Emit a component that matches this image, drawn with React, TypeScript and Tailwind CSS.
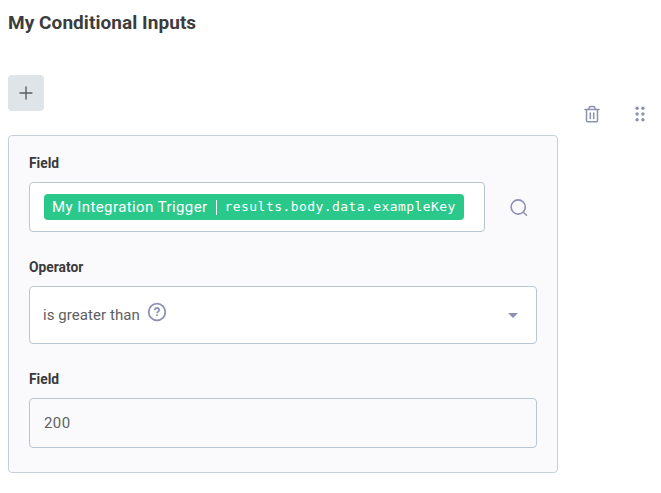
import React from "react";

function Label({ children }: { children: React.ReactNode }) {
  return <div className="h-4 text-[13.8px] font-bold leading-4 text-[#3a3a3a]">{children}</div>;
}

function TrashIcon() {
  return (
    <svg width="16" height="18" viewBox="0 0 16 18" fill="none" stroke="#8c91b2" strokeWidth="1.5" strokeLinecap="round" strokeLinejoin="round">
      <path d="M1 4.5h14M5 4.5V3.4a2 2 0 0 1 2-2h2a2 2 0 0 1 2 2v1.1M2.5 4.7v10.9a1.2 1.2 0 0 0 1.2 1.2h8.6a1.2 1.2 0 0 0 1.2-1.2V4.7M6.3 8v5.5M9.7 8v5.5" />
    </svg>
  );
}

function DragIcon() {
  return (
    <svg width="10" height="16" viewBox="0 0 10 16" fill="#8c91b2">
      {[2.2, 8, 13.8].map((y) => (
        <g key={y}>
          <circle cx="2.1" cy={y} r="1.7" />
          <circle cx="7.9" cy={y} r="1.7" />
        </g>
      ))}
    </svg>
  );
}

export default function App() {
  return (
    <div className="h-[493px] w-[661px] overflow-hidden bg-white pl-2 pt-[11px] font-['Roboto',sans-serif]">
      <h1 className="h-6 text-[19px] font-bold leading-6 tracking-[0.06px] text-[#3c3c3c]">My Conditional Inputs</h1>
      <div className="flex">
        <div className="w-[550px] pt-10">
          <button className="flex size-9 items-center justify-center rounded-[4px] bg-[#dfe4e8]">
            <svg width="14" height="14" viewBox="0 0 14 14" stroke="#5b5d5f" strokeWidth="1.4" strokeLinecap="round">
              <path d="M7 1v12M1 7h12" />
            </svg>
          </button>
          <div className="mt-6 h-[338px] rounded-[4px] border border-[#c4d0d9] bg-[#fafafc] px-5 pt-[19px]">
            <Label>Field</Label>
            <div className="mt-[11px] flex items-center">
              <div className="flex h-[50px] w-[456px] items-center rounded-[4px] border border-[#b8c7d3] bg-white pl-[14px]">
                <div className="flex h-[26px] w-[420px] items-center rounded-[4px] bg-[#2bc88b] pl-2 text-white">
                  <span className="whitespace-nowrap text-[15px] tracking-[0.42px]">My Integration Trigger</span>
                  <span className="ml-2 h-[15px] w-px bg-white" />
                  <span className="ml-2 whitespace-nowrap font-['DejaVu_Sans_Mono',monospace] text-[13px] tracking-[0.43px]">results.body.data.exampleKey</span>
                </div>
              </div>
              <svg className="ml-[25px] mt-px" width="18" height="18" viewBox="0 0 18 18" fill="none" stroke="#8c91b2" strokeWidth="1.6" strokeLinecap="round">
                <circle cx="8.2" cy="8" r="7.1" />
                <path d="m13.3 13.2 3.2 3.1" />
              </svg>
            </div>
            <div className="mt-[27px]"><Label>Operator</Label></div>
            <div className="mt-[11px] flex h-[58px] w-[508px] items-center rounded-[4px] border border-[#b8c7d3] bg-white pl-[13px] pr-[18px] text-[15px] tracking-[0.07px] text-[#606060]">
              <span>is greater than</span>
              <svg className="mb-[6px] ml-[7px]" width="20" height="20" viewBox="0 0 20 20" fill="none" stroke="#8c91b2" strokeWidth="1.8">
                <circle cx="10" cy="10" r="8.3" />
                <path d="M7.9 8.1a2.1 2 0 1 1 3.3 1.5c-.8.6-1.2.9-1.2 1.7" />
                <path d="M10 12.4v1.7" />
              </svg>
              <svg className="ml-auto" width="10" height="5" viewBox="0 0 10 5"><path d="M0 0h10L5 5Z" fill="#8c91b2" /></svg>
            </div>
            <div className="mt-[27px]"><Label>Field</Label></div>
            <div className="mt-[11px] flex h-[50px] w-[508px] items-center rounded-[4px] border border-[#b8c7d3] bg-[#fafafc] pl-[14px] text-[15px] tracking-[0.42px] text-[#606060]">200</div>
          </div>
        </div>
        <div className="ml-[26px] mt-[70px] flex h-[18px] items-center gap-[35px]">
          <TrashIcon />
          <DragIcon />
        </div>
      </div>
    </div>
  );
}
